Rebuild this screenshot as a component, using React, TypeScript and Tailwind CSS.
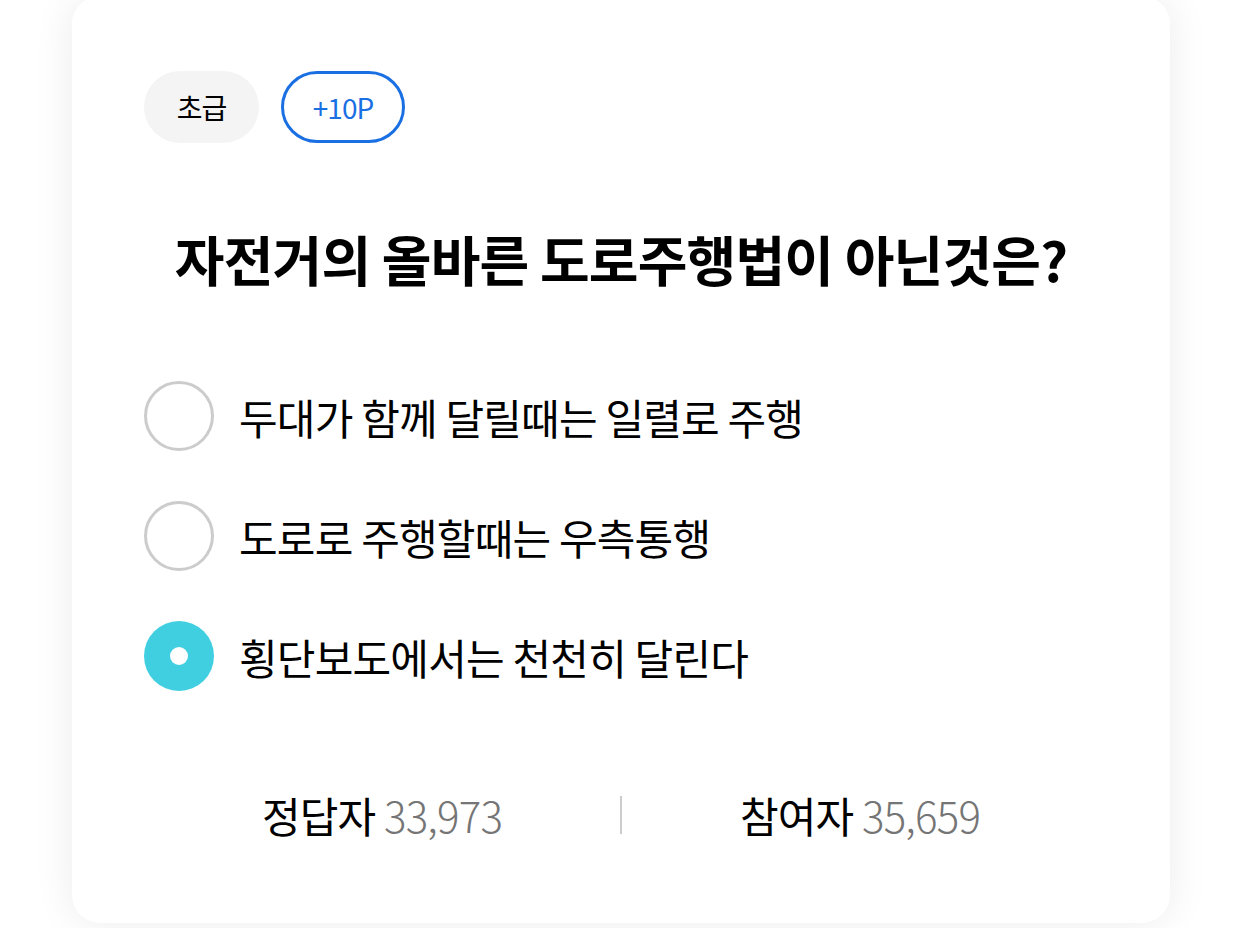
const options = [
  { id: 1, label: "두대가 함께 달릴때는 일렬로 주행" },
  { id: 2, label: "도로로 주행할때는 우측통행" },
  { id: 3, label: "횡단보도에서는 천천히 달린다" },
];

const font = "font-['Noto_Sans_CJK_KR','Noto_Sans',sans-serif]";

export default function App() {
  const selected = 3;

  return (
    <div className={`min-h-[928px] bg-white px-[72px] pb-[6px] ${font}`}>
      <div className="-mt-[4px] bg-white rounded-[28px] shadow-[0_0_40px_rgba(0,0,0,0.08)] px-[72px] pt-[75px] pb-[83px]">
        <div className="flex gap-[22px]">
          <span className="h-[72px] w-[115px] rounded-full bg-[#f4f4f4] flex items-center justify-center text-[28px] tracking-[-1px] text-black">
            초급
          </span>
          <span className="h-[72px] w-[124px] rounded-full border-[3px] border-[#1a6fe3] flex items-center justify-center text-[28px] tracking-[-1px] text-[#1a6fe3]">
            +10P
          </span>
        </div>

        <h1 className="mt-[84px] text-center text-[54px] font-bold tracking-[-0.8px] text-black leading-[64px]">
          자전거의 올바른 도로주행법이 아닌것은?
        </h1>

        <ul className="mt-[90px] flex flex-col gap-[50px]">
          {options.map((o) => (
            <li key={o.id} className="flex items-center gap-[25px] h-[70px]">
              {o.id === selected ? (
                <span className="w-[70px] h-[70px] rounded-full bg-[#40cfe1] flex items-center justify-center shrink-0">
                  <span className="w-[18px] h-[18px] rounded-full bg-white" />
                </span>
              ) : (
                <span className="w-[70px] h-[70px] rounded-full border-[3px] border-[#cccccc] shrink-0" />
              )}
              <span className="text-[42px] tracking-[-0.8px] text-black">{o.label}</span>
            </li>
          ))}
        </ul>

        <div className="mt-[99px] flex items-center h-[50px]">
          <div className="flex-1 text-center text-[42px] tracking-[-0.8px] text-black leading-[50px]">
            정답자 <span className="text-[#757575] font-light">33,973</span>
          </div>
          <span className="w-[2px] h-[38px] bg-[#cccccc]" />
          <div className="flex-1 text-center text-[42px] tracking-[-0.8px] text-black leading-[50px]">
            참여자 <span className="text-[#757575] font-light">35,659</span>
          </div>
        </div>
      </div>
    </div>
  );
}
